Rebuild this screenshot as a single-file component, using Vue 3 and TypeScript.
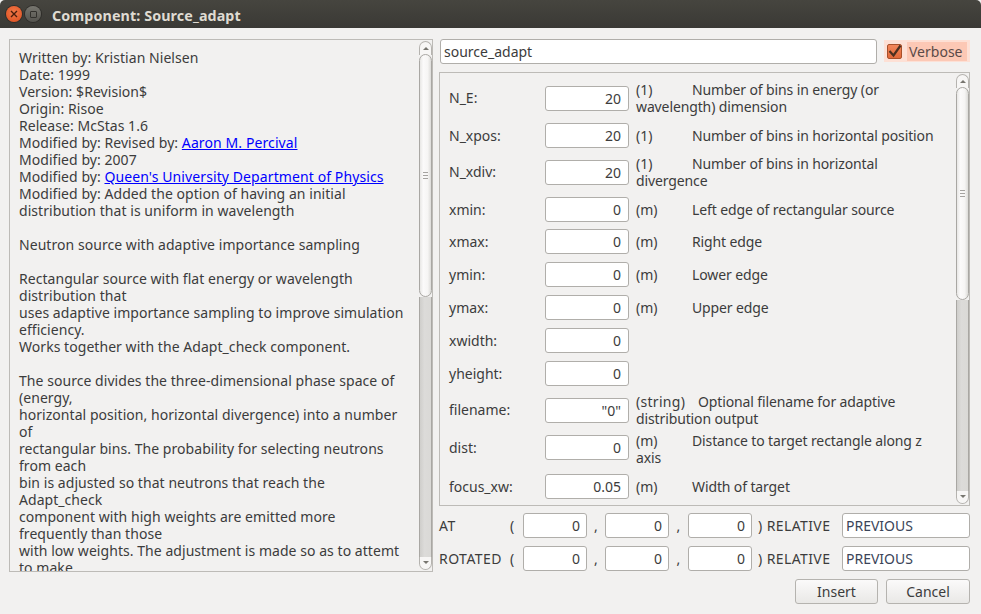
<script setup lang="ts">
type Part = { t: string; link?: boolean };
const doc: Part[][] = [
  [{ t: 'Written by: Kristian Nielsen' }],
  [{ t: 'Date: 1999' }],
  [{ t: 'Version: $Revision$' }],
  [{ t: 'Origin: Risoe' }],
  [{ t: 'Release: McStas 1.6' }],
  [{ t: 'Modified by: Revised by: ' }, { t: 'Aaron M. Percival', link: true }],
  [{ t: 'Modified by: 2007' }],
  [{ t: 'Modified by: ' }, { t: "Queen's University Department of Physics", link: true }],
  [{ t: 'Modified by: Added the option of having an initial' }],
  [{ t: 'distribution that is uniform in wavelength' }],
  [{ t: '\u00a0' }],
  [{ t: 'Neutron source with adaptive importance sampling' }],
  [{ t: '\u00a0' }],
  [{ t: 'Rectangular source with flat energy or wavelength' }],
  [{ t: 'distribution that' }],
  [{ t: 'uses adaptive importance sampling to improve simulation' }],
  [{ t: 'efficiency.' }],
  [{ t: 'Works together with the Adapt_check component.' }],
  [{ t: '\u00a0' }],
  [{ t: 'The source divides the three-dimensional phase space of' }],
  [{ t: '(energy,' }],
  [{ t: 'horizontal position, horizontal divergence) into a number' }],
  [{ t: 'of' }],
  [{ t: 'rectangular bins. The probability for selecting neutrons' }],
  [{ t: 'from each' }],
  [{ t: 'bin is adjusted so that neutrons that reach the' }],
  [{ t: 'Adapt_check' }],
  [{ t: 'component with high weights are emitted more' }],
  [{ t: 'frequently than those' }],
  [{ t: 'with low weights. The adjustment is made so as to attemt' }],
  [{ t: 'to make' }],
];

type Param = { name: string; value: string; unit?: string; desc?: string[]; inline?: boolean };
const params: Param[] = [
  { name: 'N_E:', value: '20', unit: '(1)', desc: ['Number of bins in energy (or', 'wavelength) dimension'] },
  { name: 'N_xpos:', value: '20', unit: '(1)', desc: ['Number of bins in horizontal position'] },
  { name: 'N_xdiv:', value: '20', unit: '(1)', desc: ['Number of bins in horizontal', 'divergence'] },
  { name: 'xmin:', value: '0', unit: '(m)', desc: ['Left edge of rectangular source'] },
  { name: 'xmax:', value: '0', unit: '(m)', desc: ['Right edge'] },
  { name: 'ymin:', value: '0', unit: '(m)', desc: ['Lower edge'] },
  { name: 'ymax:', value: '0', unit: '(m)', desc: ['Upper edge'] },
  { name: 'xwidth:', value: '0' },
  { name: 'yheight:', value: '0' },
  { name: 'filename:', value: '"0"', unit: '(string)', desc: ['Optional filename for adaptive', 'distribution output'], inline: true },
  { name: 'dist:', value: '0', unit: '(m)', desc: ['Distance to target rectangle along z', 'axis'] },
  { name: 'focus_xw:', value: '0.05', unit: '(m)', desc: ['Width of target'] },
];

const placements = [
  { label: 'AT', values: ['0', '0', '0'] },
  { label: 'ROTATED', values: ['0', '0', '0'] },
];
</script>

<template>
  <div class="window">
    <header class="titlebar">
      <span class="wbtn close">
        <svg width="8" height="8" viewBox="0 0 8 8"><path d="M1 1 7 7M7 1 1 7" stroke="#4a1d0c" stroke-width="1.4" fill="none" /></svg>
      </span>
      <span class="wbtn max"><i></i></span>
      <span class="title">Component: Source_adapt</span>
    </header>

    <main class="content">
      <section class="docpane">
        <div class="doctext">
          <div v-for="(line, i) in doc" :key="i" class="docline">
            <template v-for="(p, j) in line" :key="j">
              <a v-if="p.link" class="link">{{ p.t }}</a>
              <span v-else>{{ p.t }}</span>
            </template>
          </div>
        </div>
        <div class="scrollbar doc-sb">
          <div class="sb-up"><b class="arrow-up"></b></div>
          <div class="sb-thumb"><span class="grip"></span></div>
          <div class="sb-track"></div>
          <div class="sb-down"><b class="arrow-down"></b></div>
        </div>
      </section>

      <section class="right">
        <div class="toprow">
          <div class="field namefield">source_adapt</div>
          <div class="verbose">
            <span class="check">
              <svg class="tick" width="15" height="15" viewBox="0 0 15 15"><path d="M2.5 7 6.5 11.5 13.5 1.5" stroke="#4b3020" stroke-width="2.2" fill="none" /></svg>
            </span>
            <span class="verbose-label">Verbose</span>
          </div>
        </div>

        <div class="params">
          <div class="paramlist">
            <div v-for="p in params" :key="p.name" class="param">
              <span class="pname">{{ p.name }}</span>
              <div class="field num pvalue">{{ p.value }}</div>
              <div v-if="p.unit" class="pdesc" :class="{ inline: p.inline }">
                <div class="firstline">
                  <span class="punit">{{ p.unit }}</span><span>{{ p.desc?.[0] }}</span>
                </div>
                <div v-if="p.desc && p.desc[1]">{{ p.desc[1] }}</div>
              </div>
            </div>
          </div>
          <div class="scrollbar param-sb">
            <div class="sb-up"><b class="arrow-up"></b></div>
            <div class="sb-thumb"><span class="grip"></span></div>
            <div class="sb-track"></div>
            <div class="sb-down"><b class="arrow-down"></b></div>
          </div>
        </div>

        <div class="placements">
          <div v-for="pl in placements" :key="pl.label" class="placement">
            <span class="pl-label">{{ pl.label }}</span>
            <span class="paren">(</span>
            <div class="field num coord">{{ pl.values[0] }}</div>
            <span class="comma">,</span>
            <div class="field num coord">{{ pl.values[1] }}</div>
            <span class="comma">,</span>
            <div class="field num coord">{{ pl.values[2] }}</div>
            <span class="relative">) RELATIVE</span>
            <div class="field relfield">PREVIOUS</div>
          </div>
        </div>

        <div class="actions">
          <button class="btn insert">Insert</button>
          <button class="btn cancel">Cancel</button>
        </div>
      </section>
    </main>
  </div>
</template>

<style>
html, body { margin: 0; background: #f2f1f0; }
</style>

<style scoped>
.window {
  width: 981px;
  height: 614px;
  overflow: hidden;
  background: #f2f1f0;
  color: #3c3c3c;
  font-family: "Noto Sans", "Open Sans", sans-serif;
  font-size: 14px;
  line-height: 17px;
  display: flex;
  flex-direction: column;
}
.titlebar {
  height: 28px;
  flex: none;
  box-sizing: border-box;
  background: linear-gradient(#46453f, #3a3935);
  border-radius: 5px 5px 0 0;
  display: flex;
  align-items: center;
  padding-left: 6px;
}
.wbtn {
  width: 16px;
  height: 16px;
  border-radius: 50%;
  display: flex;
  align-items: center;
  justify-content: center;
}
.close {
  background: radial-gradient(circle at 50% 40%, #f37a4a, #dc4c1c);
  box-shadow: 0 0 0 1px #2e2d2a;
}
.max {
  margin-left: 3px;
  background: linear-gradient(#77766f, #55544f);
  box-shadow: 0 0 0 1px #2e2d2a;
}
.max i {
  width: 5px;
  height: 5px;
  border: 1.5px solid #32312d;
  border-radius: 1px;
}
.title {
  margin-left: 11px;
  padding-top: 2px;
  color: #dfdbd2;
  font-weight: 700;
  font-size: 14.3px;
  letter-spacing: 0.1px;
}
.content {
  flex: 1;
  display: flex;
  padding: 11px 11px 10px 9px;
  gap: 6px;
  min-height: 0;
}
.docpane {
  width: 424px;
  height: 533px;
  flex: none;
  box-sizing: border-box;
  border: 1px solid #bdbbb7;
  display: flex;
  overflow: hidden;
}
.doctext {
  flex: 1;
  padding: 9px 0 0 9px;
  min-width: 0;
  overflow: hidden;
  white-space: nowrap;
  letter-spacing: 0.05px;
}
.docline {
  height: 17px;
}
.link {
  color: #0000ff;
  text-decoration: underline;
  letter-spacing: 0.1px;
}

.scrollbar {
  width: 13px;
  flex: none;
  display: flex;
  flex-direction: column;
  margin-top: 1px;
  margin-bottom: 1px;
}
.sb-up {
  height: 14px;
  flex: none;
  box-sizing: border-box;
  border: 1px solid #b5b3af;
  border-bottom: none;
  border-radius: 7px 7px 0 0;
  background: #f7f6f5;
  display: flex;
  justify-content: center;
  padding-top: 5px;
}
.sb-down {
  height: 13px;
  flex: none;
  box-sizing: border-box;
  border: 1px solid #b5b3af;
  border-top: none;
  border-radius: 0 0 7px 7px;
  background: #f7f6f5;
  display: flex;
  justify-content: center;
  padding-top: 4px;
}
.arrow-up {
  width: 0;
  height: 0;
  border: 3px solid transparent;
  border-top: none;
  border-bottom: 3px solid #77756f;
}
.arrow-down {
  width: 0;
  height: 0;
  border: 3px solid transparent;
  border-bottom: none;
  border-top: 3px solid #77756f;
}
.sb-thumb {
  flex: none;
  box-sizing: border-box;
  border: 1px solid #a9a7a3;
  border-radius: 7px;
  background: linear-gradient(90deg, #e8e7e5, #fbfafa 30%, #f6f5f4 70%, #dddcd9);
  display: flex;
  align-items: center;
  justify-content: center;
}
.doc-sb .sb-thumb { height: 243px; margin-top: -1px; }
.param-sb .sb-thumb { height: 213px; margin-top: -1px; }
.grip {
  width: 5px;
  height: 7px;
  background: repeating-linear-gradient(#a5a3a0 0 1px, transparent 1px 3px);
}
.sb-track {
  flex: 1;
  box-sizing: border-box;
  border-left: 1px solid #a9a7a3;
  border-right: 1px solid #a9a7a3;
  background: linear-gradient(90deg, #cfcecb, #dcdbd9 40%, #dad9d6);
}

.right {
  flex: 1;
  min-width: 0;
  display: flex;
  flex-direction: column;
}
.toprow {
  display: flex;
  align-items: flex-start;
  height: 33px;
  flex: none;
  box-sizing: border-box;
  padding-top: 1px;
}
.field {
  box-sizing: border-box;
  height: 25px;
  background: #fff;
  border: 1px solid #b0aeaa;
  border-radius: 3px;
  padding: 0 3px;
  line-height: 23px;
  color: #3c3c3c;
  white-space: nowrap;
}
.num {
  text-align: right;
  padding-right: 6px;
}
.namefield {
  width: 437px;
  margin-left: 1px;
  margin-top: -1px;
}
.verbose {
  width: 86px;
  height: 22px;
  margin-left: 7px;
  background: #fde0d5;
  display: flex;
  align-items: center;
  padding: 1px 3px 1px 3px;
  box-sizing: border-box;
}
.check {
  width: 15px;
  height: 15px;
  flex: none;
  box-sizing: border-box;
  border: 1px solid #a8502a;
  border-radius: 2px;
  background: linear-gradient(#f2865a, #e0693a);
  display: flex;
  align-items: center;
  justify-content: center;
  overflow: visible;
}
.tick {
  flex: none;
}
.verbose-label {
  margin-left: 5px;
  padding-left: 2px;
  height: 19px;
  line-height: 20px;
  flex: 1;
  background: #fcc8b5;
  color: #5a4a48;
}
.params {
  width: 531px;
  height: 434px;
  flex: none;
  box-sizing: border-box;
  border: 1px solid #bdbbb7;
  display: flex;
  overflow: hidden;
}
.paramlist {
  flex: 1;
  min-width: 0;
  padding: 8px 0 0 9px;
  display: flex;
  flex-direction: column;
  gap: 8px;
}
.param {
  display: flex;
  align-items: center;
  min-height: 25px;
}
.param:nth-child(3),
.param:nth-child(5),
.param:nth-child(10) {
  margin-top: -1px;
}
.param:nth-child(11) {
  margin-top: -3px;
}
.param:nth-child(11) .pvalue,
.param:nth-child(11) .pname {
  margin-top: -4px;
}
.param:nth-child(1) .pname,
.param:nth-child(3) .pname,
.param:nth-child(10) .pname {
  padding-bottom: 2px;
}
.pname {
  width: 96px;
  flex: none;
}
.pvalue {
  width: 84px;
  flex: none;
  padding-right: 7px;
}
.pdesc {
  margin-left: 7px;
  white-space: nowrap;
  letter-spacing: -0.12px;
}
.firstline { display: flex; }
.punit { width: 56px; flex: none; letter-spacing: 0; }
.inline .punit { width: 62px; letter-spacing: 0.3px; }
.placements {
  margin-top: 7px;
  display: flex;
  flex-direction: column;
  gap: 8px;
}
.placement {
  display: flex;
  align-items: center;
  height: 25px;
}
.pl-label { width: 71px; flex: none; letter-spacing: 0.45px; }
.paren { width: 13px; flex: none; }
.coord { width: 64px; flex: none; }
.comma { width: 18px; flex: none; text-align: center; }
.comma + .coord + .comma { width: 19px; }
.relative { width: 84px; flex: none; margin-left: 6px; letter-spacing: 0.4px; }
.relfield { width: 128px; flex: none; color: #3a4458; }
.actions {
  margin-top: 8px;
  display: flex;
  justify-content: flex-end;
  gap: 8px;
}
.btn {
  height: 25px;
  box-sizing: border-box;
  border: 1px solid #b5b3af;
  border-radius: 3px;
  background: linear-gradient(#fbfafa, #e9e8e6);
  font: inherit;
  color: #3c3c3c;
  padding: 0;
}
.insert { width: 83px; }
.cancel { width: 84px; }
</style>
